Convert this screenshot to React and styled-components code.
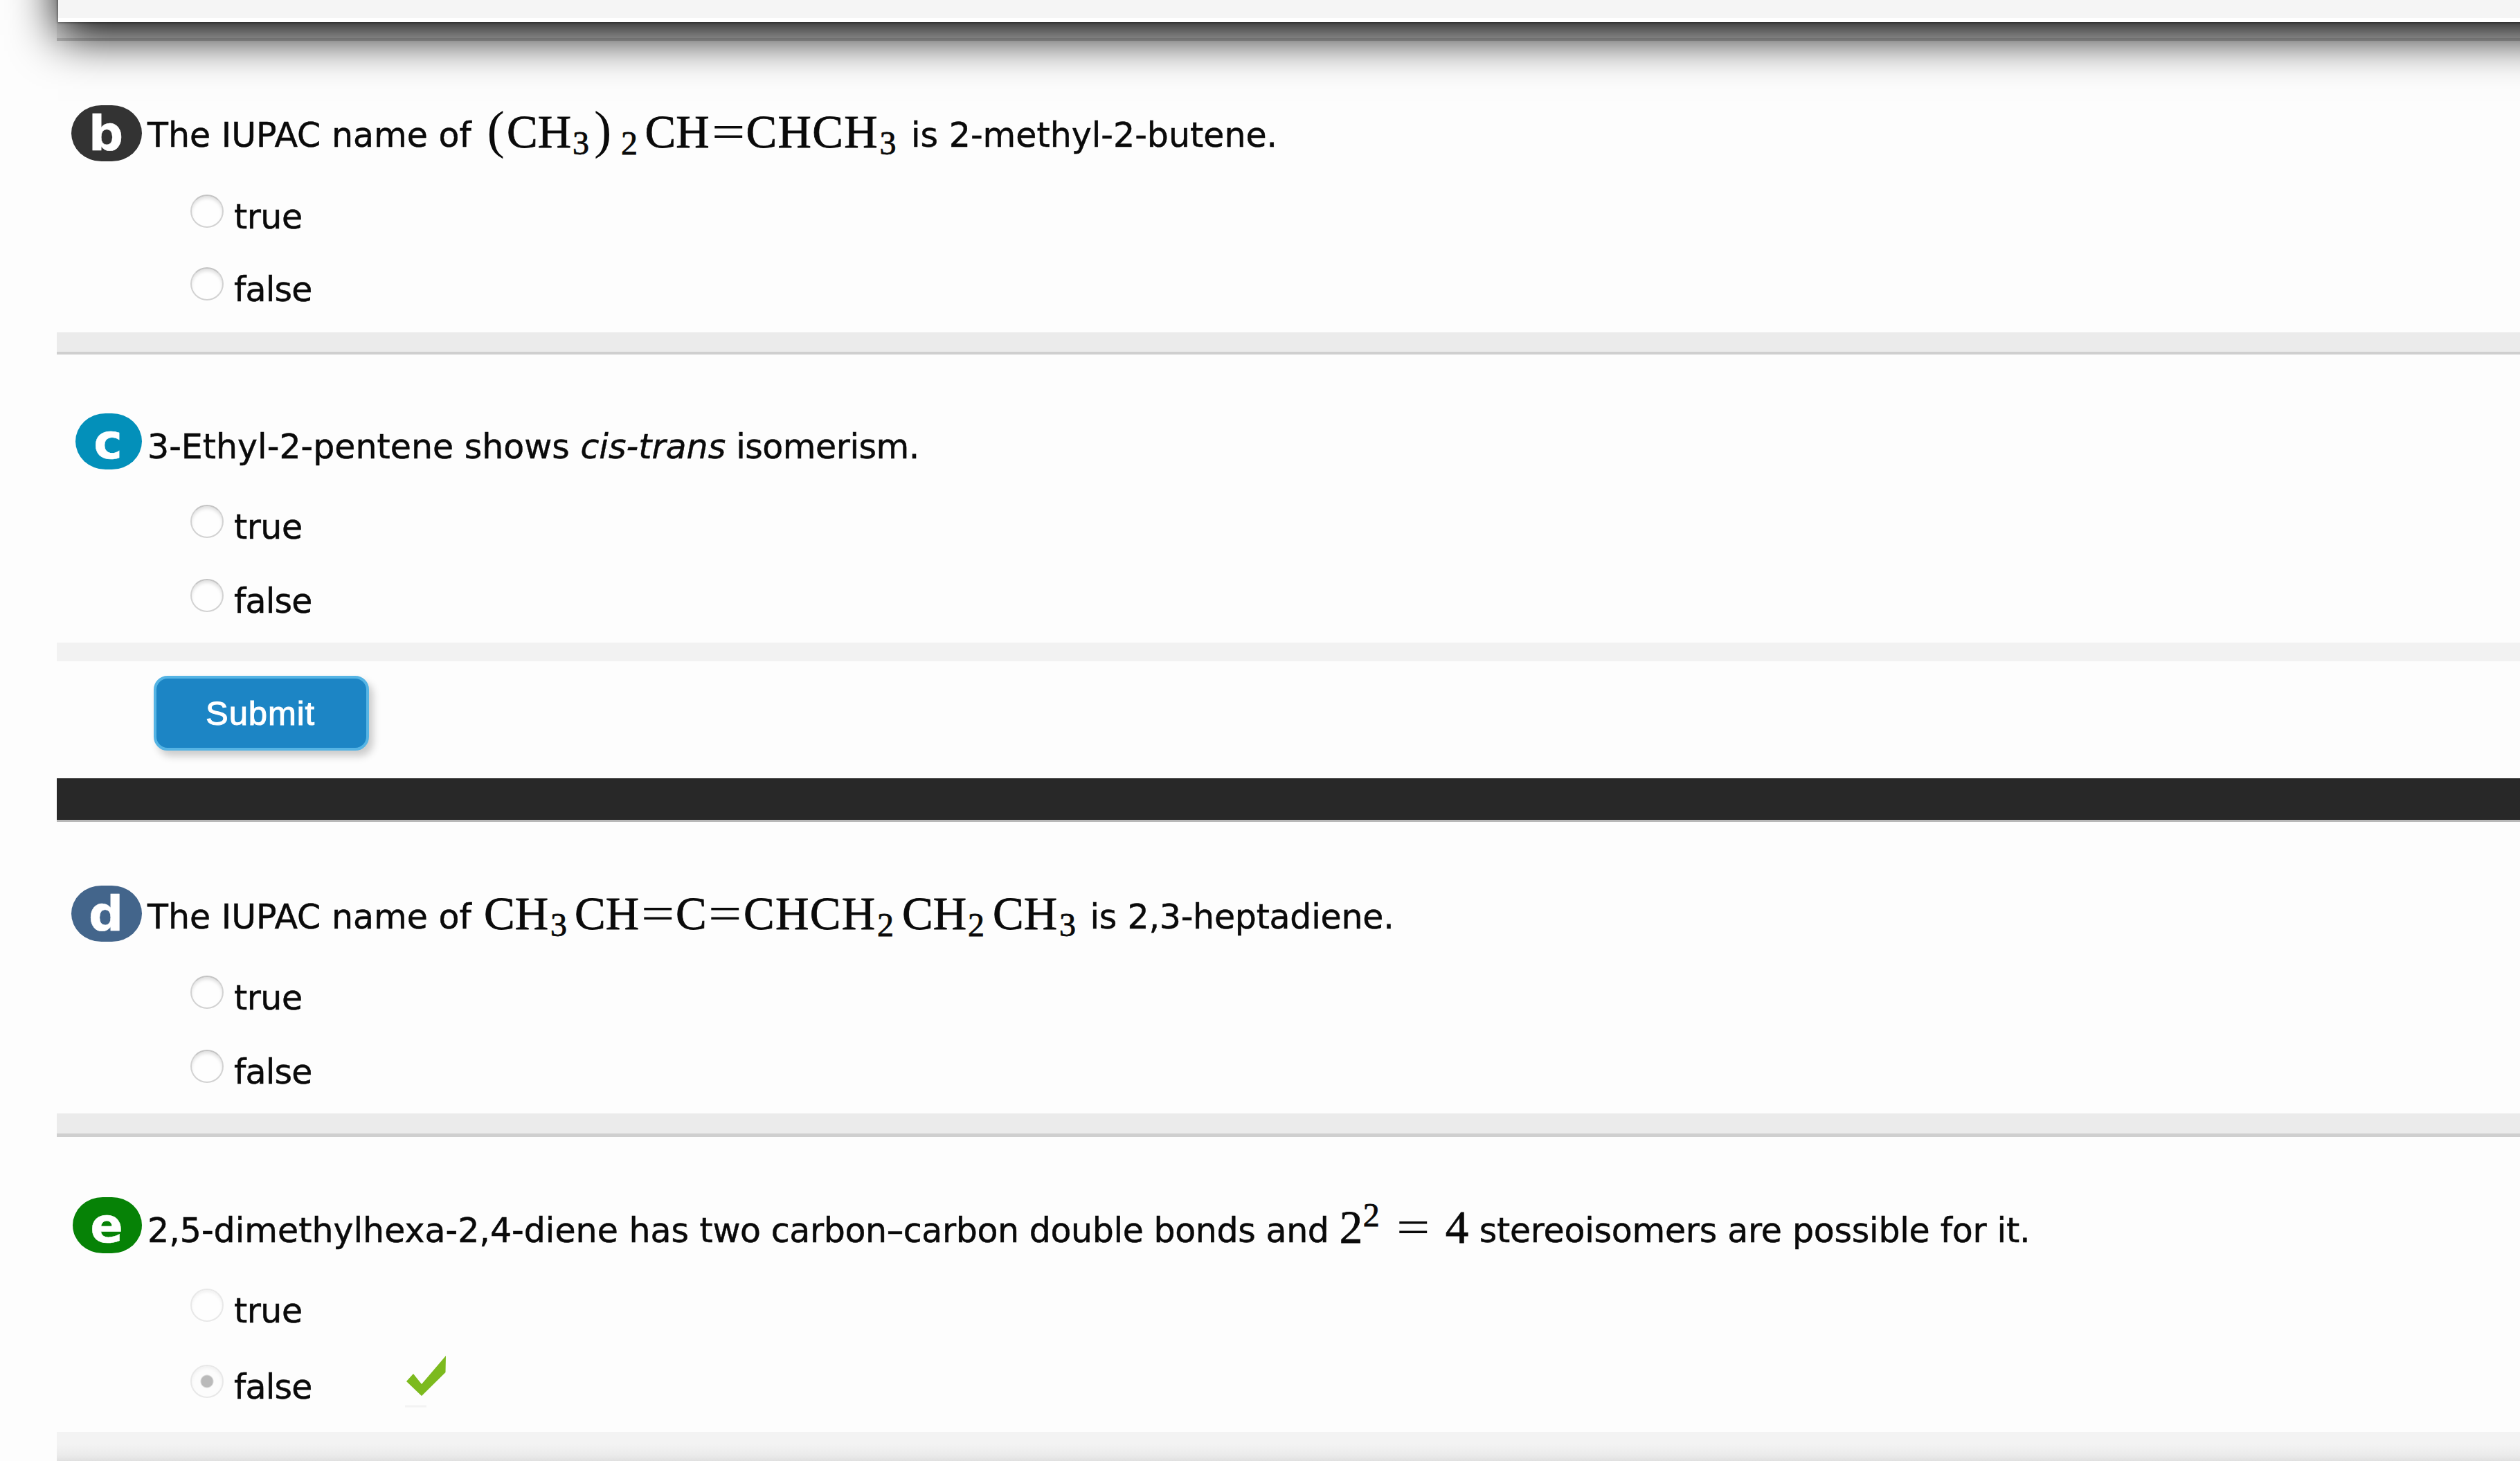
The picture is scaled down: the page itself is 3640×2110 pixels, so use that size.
import React from "react";
import styled, { createGlobalStyle } from "styled-components";

const GlobalStyle = createGlobalStyle`
	body {
		margin: 0;
		background-color: #fdfdfd;
	}
`;

const Page = styled.div`
	box-sizing: border-box;
	display: flex;
	flex-direction: column;
	width: 3640px;
	height: 2110px;
	padding-left: 82px;
	overflow: hidden;
	background-color: #fdfdfd;
	color: #0a0a0a;
	font-family: Verdana, "DejaVu Sans", sans-serif;
	font-size: 49px;
	-webkit-text-stroke: 0.5px currentColor;
`;

/* The panel starts above the viewport, only its bottom edge is visible. */
const TopPanel = styled.div`
	box-sizing: border-box;
	flex: none;
	z-index: 1;
	height: 332px;
	margin: -300px -200px 0 2px;
	background-color: #f5f5f5;
	border-bottom: 6px solid #ffffff;
	box-shadow: 0 19px 64px #000000, 0 0 3px 1px rgba(0, 0, 0, 0.4);
`;

const Divider = styled.div`
	box-sizing: border-box;
	flex: none;
	height: ${props => props.$height}px;
	background-color: ${props => props.$color || "#ebebeb"};
	border-bottom: ${props => props.$line || "none"};
`;

const BottomBar = styled.div`
	flex: 1;
	background: linear-gradient(#f3f3f3 0, #f3f3f3 40%, #ebebeb 80%, #e0e0e0 100%);
`;

const Section = styled.section`
	box-sizing: border-box;
	display: flex;
	flex: none;
	flex-direction: column;
	height: ${props => props.$height}px;
	padding-top: ${props => props.$top}px;
`;

const Title = styled.div`
	display: flex;
	align-items: flex-start;
	gap: 8px;
	height: ${props => props.$height}px;
`;

const BadgeSlot = styled.div`
	display: flex;
	justify-content: flex-end;
	width: 123px;
`;

const Badge = styled.span`
	box-sizing: border-box;
	width: ${props => props.$width}px;
	height: 81px;
	padding-right: 2px;
	border-radius: 44px / 41px;
	background-color: ${props => props.$color};
	color: #ffffff;
	font-size: 70px;
	font-weight: bold;
	line-height: 82px;
	text-align: center;
`;

const Statement = styled.div`
	line-height: ${props => props.$line}px;
	white-space: pre;
`;

const Run = styled.span`
	display: inline-block;
	width: ${props => (props.$width ? props.$width + "px" : "auto")};
	letter-spacing: ${props => props.$spacing || 0}px;
`;

const MathRun = styled(Run)`
	font-family: "Liberation Serif", serif;
	font-size: 67px;
	line-height: 0;
	vertical-align: -1px;
	-webkit-text-stroke: 0.8px currentColor;
`;

const Paren = styled(MathRun)`
	font-size: 76px;
	-webkit-text-stroke: 0;
`;

const Sub = styled(MathRun)`
	font-size: 48px;
	vertical-align: -11px;
`;

const Sup = styled(MathRun)`
	font-size: 48px;
	vertical-align: 23px;
`;

const Equals = styled(MathRun)`
	transform: scaleX(1.28);
	transform-origin: left;
	-webkit-text-stroke: 0;
`;

const Options = styled.div`
	display: flex;
	flex-direction: column;
	gap: ${props => props.$gap}px;
	padding-left: 193px;
`;

const Option = styled.label`
	display: flex;
	align-items: flex-start;
	gap: 15px;
	height: 48px;
	letter-spacing: -0.5px;
	line-height: 65px;
`;

const Radio = styled.input`
	appearance: none;
	box-sizing: border-box;
	width: 48px;
	height: 48px;
	margin: 0;
	border: 2px solid #d2d2d2;
	border-top-color: #c4c4c4;
	border-radius: 50%;
	background: #fefefe;
	box-shadow: inset 0 4px 5px -1px #dddddd;

	&:disabled {
		border-color: #e8e8e8;
		box-shadow: inset 0 3px 5px -1px #eeeeee;
	}
	&:checked {
		background: radial-gradient(circle, #bababa 8px, #fcfcfc 10px);
	}
`;

const CheckMark = styled.svg`
	width: 58px;
	height: 60px;
	margin: -13px 0 0 123px;
	overflow: visible;
`;

const SubmitRow = styled.div`
	box-sizing: border-box;
	display: flex;
	flex: none;
	align-items: flex-start;
	height: 169px;
	padding: 21px 0 0 140px;
`;

const SubmitButton = styled.button`
	box-sizing: border-box;
	width: 311px;
	height: 108px;
	padding: 0 3px 0 0;
	border: 4px solid #55b4e4;
	border-radius: 20px;
	background-color: #1c85c5;
	box-shadow: 6px 8px 12px rgba(0, 0, 0, 0.2);
	color: #ffffff;
	font-family: "Liberation Sans", Arial, sans-serif;
	font-size: 49px;
	letter-spacing: 0.9px;
	line-height: 101px;
	-webkit-text-stroke: 1px currentColor;
`;

const questions = {
	b: {
		height: 421,
		top: 92.5,
		color: "#333333",
		badge: 102,
		line: 87,
		first: 129.5,
		gap: 57,
		statement: (
			<>
				<Run $width={490.5}>The IUPAC name of </Run>
				<Paren $width={28.5}>(</Paren>
				<MathRun $width={95}>CH</MathRun>
				<Sub $width={31}>3</Sub>
				<Paren $width={39}>)</Paren>
				<Sub $width={34.5}>2</Sub>
				<MathRun $width={96.5}>CH</MathRun>
				<Equals $width={49.5}>=</Equals>
				<MathRun $width={193} $spacing={1.3}>CHCH</MathRun>
				<Sub $width={45.5}>3</Sub>
				is 2-methyl-2-butene.
			</>
		),
	},
	c: {
		height: 416,
		top: 85,
		color: "#0390ba",
		badge: 96,
		line: 97,
		first: 132,
		gap: 59,
		statement: (
			<>
				3-Ethyl-2-pentene shows <i>cis-trans</i>
				<Run $spacing={-0.5}> isomerism.</Run>
			</>
		),
	},
	d: {
		height: 421,
		top: 92,
		color: "#43658b",
		badge: 102,
		line: 92,
		first: 130,
		gap: 59,
		statement: (
			<>
				<Run $width={486}>The IUPAC name of </Run>
				<MathRun $width={96}>CH</MathRun>
				<Sub $width={35}>3</Sub>
				<MathRun $width={96}>CH</MathRun>
				<Equals $width={50}>=</Equals>
				<MathRun $width={47}>C</MathRun>
				<Equals $width={51}>=</Equals>
				<MathRun $width={193} $spacing={1.3}>CHCH</MathRun>
				<Sub $width={36}>2</Sub>
				<MathRun $width={95}>CH</MathRun>
				<Sub $width={36}>2</Sub>
				<MathRun $width={96}>CH</MathRun>
				<Sub $width={44.5}>3</Sub>
				<Run $spacing={-0.25}>is 2,3-heptadiene.</Run>
			</>
		),
	},
	e: {
		height: 426,
		top: 87,
		color: "#068206",
		badge: 100,
		line: 97,
		first: 132,
		gap: 62,
		answered: true,
		statement: (
			<>
				<Run>2,5-dimethylhexa-2,4-diene has </Run>
				<Run $spacing={-0.4}>two carbon–carbon double bonds and </Run>
				<MathRun $width={34}>2</MathRun>
				<Sup $width={48}>2</Sup>
				<Equals $width={71}>=</Equals>
				<MathRun $width={49}>4</MathRun>
				<Run $spacing={-0.27}>stereoisomers are possible for it.</Run>
			</>
		),
	},
};

const Question = ({ id }) => {
	const q = questions[id];
	return (
		<Section $height={q.height} $top={q.top}>
			<Title $height={q.first}>
				<BadgeSlot>
					<Badge $color={q.color} $width={q.badge}>
						{id}
					</Badge>
				</BadgeSlot>
				<Statement $line={q.line}>{q.statement}</Statement>
			</Title>
			<Options $gap={q.gap}>
				<Option>
					<Radio type="radio" name={id} disabled={q.answered} />
					true
				</Option>
				<Option>
					<Radio
						type="radio"
						name={id}
						disabled={q.answered}
						defaultChecked={q.answered}
					/>
					<Run $width={111} $spacing={-0.8}>false</Run>
					{q.answered ? (
						<CheckMark viewBox="0 0 58 60">
							<path
								d="M57 0 L56.5 24 L22 58 L0 37 L10 26 L22 41 Z"
								fill="#7cba1e"
							/>
							<path d="M-2 73 H29" stroke="#f3f3f3" strokeWidth="3" />
						</CheckMark>
					) : null}
				</Option>
			</Options>
		</Section>
	);
};

const App = () => (
	<Page>
		<GlobalStyle />
		<TopPanel />
		<Divider $height={27} $line="4px solid #cccccc" />
		<Question id="b" />
		<Divider $height={32} $line="4px solid #cfcfcf" />
		<Question id="c" />
		<Divider $height={27} $color="#f2f2f2" />
		<SubmitRow>
			<SubmitButton>Submit</SubmitButton>
		</SubmitRow>
		<Divider $height={63} $color="#282828" $line="3px solid #b8b8b8" />
		<Question id="d" />
		<Divider $height={34} $line="5px solid #cfcfcf" />
		<Question id="e" />
		<BottomBar />
	</Page>
);

export default App;
